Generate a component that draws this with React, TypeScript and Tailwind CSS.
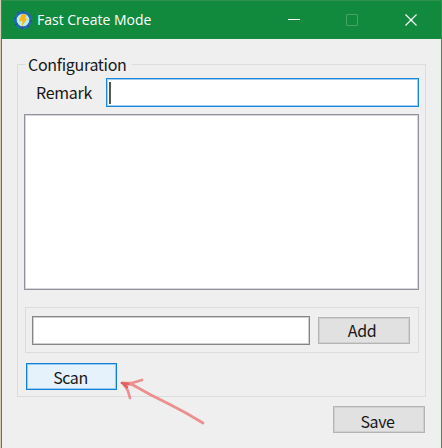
import React from "react";

function AppIcon() {
  return (
    <svg width="20" height="20" viewBox="0 0 20 20" className="shrink-0">
      <circle cx="10" cy="10" r="7.7" fill="#b8eee4" stroke="#2468b4" strokeWidth="2.8" />
      <path d="M10 0.5v2M5 2l1 1.5M1 8l2 .5M2 15l2-1M9 19l1-2M16 17l-1.5-1.5M19 11h-2" stroke="#174f91" strokeWidth="1.2" />
      <path d="M8.5 4.2h5l-1.2 4.2h2L8.8 16.4l.7-5.4H6z" fill="#f9b51c" />
    </svg>
  );
}

function Button({ className, children }: { className: string; children: React.ReactNode }) {
  return (
    <button className={`flex items-center justify-center border text-[16px] leading-5 tracking-[-0.4px] text-[#181818] ${className}`}>
      {children}
    </button>
  );
}

export default function App() {
  return (
    <div className="flex h-[448px] w-[442px] overflow-hidden border-l border-[#d6ccb8] bg-[#efefef] font-['Noto_Sans_CJK_SC','Noto_Sans',sans-serif]">
      <div className="flex min-w-0 flex-1 flex-col border-x border-[#2f9150]">
        <header className="flex h-[39px] shrink-0 items-center border-t border-[#2f9150] bg-[#128a3e] pl-[11px] font-['Open_Sans','Noto_Sans',sans-serif] text-white">
          <AppIcon />
          <span className="ml-1 text-[14px] leading-5">Fast Create Mode</span>
          <svg width="127" height="14" viewBox="0 0 127 14" className="ml-auto mr-[24px] overflow-visible" fill="none">
            <path d="M-2 6.5h12" stroke="#fff" />
            <path d="M56.5 1.5h11v11h-11z" stroke="#43a467" />
            <path d="M115.5 1.5l11 11M126.5 1.5l-11 11" stroke="#fff" strokeWidth="1.2" />
          </svg>
        </header>

        <main className="flex flex-1 flex-col pl-[15px] pr-[15px] pt-[25px]">
          <section className="flex h-[333px] shrink-0 flex-col border border-[#dcdcdc] pl-[7px] pr-[6px]">
            <h2 className="-mt-[12px] ml-[1px] h-[23px] w-[106px] bg-[#efefef] pl-[2px] text-[16px] leading-[22px] tracking-[-0.3px] text-[#181818]">Configuration</h2>
            <div className="mt-[2px] flex h-[29px] items-center">
              <label className="w-[81px] pb-[2px] pl-[11px] text-[16px] leading-5 tracking-[-0.3px] text-[#181818]">Remark</label>
              <div className="flex h-[29px] w-[313px] items-center border border-[#1b86da] bg-white pl-[2px] shadow-[inset_0_0_0_1px_#9fcdf0]">
                <span className="h-[22px] w-[2px] bg-[#555]" />
              </div>
            </div>
            <div className="-ml-[1px] mt-[7px] h-[176px] w-[395px] shrink-0 border border-[#90939b] bg-white shadow-[inset_0_0_0_1px_#d5d7da]" />
            <div className="mt-[17px] flex h-[46px] shrink-0 items-center border border-[#dcdcdc] pl-[6px]">
              <div className="h-[29px] w-[278px] border border-[#858585] bg-white shadow-[inset_0_0_0_1px_#cfcfcf]" />
              <Button className="ml-2 h-[27px] w-[92px] border-[#b4b4b4] bg-[#e1e1e1] pr-[4px] shadow-[inset_0_0_0_1px_#d0d0d0]">Add</Button>
            </div>
            <div className="mt-[10px] flex">
              <Button className="ml-px h-[27px] w-[91px] border-[#0f7fda] bg-[#e5f1fb] pr-[2px] pt-px shadow-[inset_0_0_0_1px_#9acbf1]">Scan</Button>
            </div>
          </section>
          <div className="mr-px mt-[9px] flex justify-end">
            <Button className="h-[27px] w-[92px] border-[#b4b4b4] bg-[#e1e1e1] pr-[3px] pt-[2px] shadow-[inset_0_0_0_1px_#d0d0d0]">Save</Button>
          </div>
        </main>
      </div>
      <svg width="86" height="48" viewBox="0 0 86 48" className="pointer-events-none absolute left-[120px] top-[378px]" fill="none" stroke="#ec8f8f" strokeWidth="2.7" strokeLinecap="round" strokeLinejoin="round">
        <path d="M2 5L12 5 22 2M4 6l4 7 2 7M3 5l10 2 18 10 18 9 17 9 17 10" />
        <path d="M2 5l6 1M4 7l3 2" stroke="#e45d60" />
      </svg>
    </div>
  );
}
